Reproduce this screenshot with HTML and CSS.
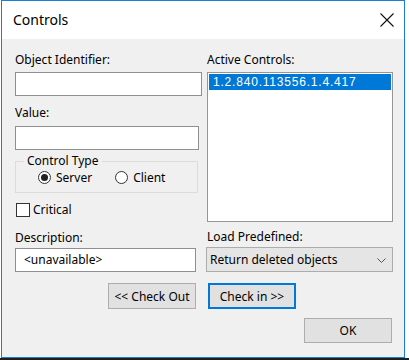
FILE: index.html
```html
<!DOCTYPE html>
<html>
<head>
<meta charset="utf-8">
<link rel="stylesheet" href="styles.css">
</head>
<body>
<div class="frame">
  <div class="window">
    <div class="titlebar">
      <span class="title">Controls</span>
      <svg class="close" width="14" height="14" viewBox="0 0 14 14"><path d="M0.5 0.5 L13.5 13.5 M13.5 0.5 L0.5 13.5" stroke="#111" stroke-width="1.1" fill="none"/></svg>
    </div>
    <div class="content">
      <div class="columns">
        <div class="col">
          <div class="lbl">Object Identifier:</div>
          <div class="edit oid"></div>
          <div class="lbl value-lbl">Value:</div>
          <div class="edit value"></div>
          <div class="group">
            <span class="legend">Control Type</span>
            <div class="radios">
              <span class="radio"><span class="circle checked"></span>Server</span>
              <span class="radio client"><span class="circle"></span>Client</span>
            </div>
          </div>
          <div class="check"><span class="box"></span>Critical</div>
          <div class="lbl desc-lbl">Description:</div>
          <div class="edit desc">&lt;unavailable&gt;</div>
        </div>
        <div class="col">
          <div class="lbl">Active Controls:</div>
          <div class="listbox"><div class="item selected">1.2.840.113556.1.4.417</div></div>
          <div class="lbl load-lbl">Load Predefined:</div>
          <div class="combo"><span>Return deleted objects</span><svg class="chev" width="9" height="5" viewBox="0 0 9 5"><path d="M0.5 0.5 L4.5 4.5 L8.5 0.5" stroke="#555" stroke-width="1" fill="none"/></svg></div>
        </div>
      </div>
      <div class="transfer">
        <button class="btn out">&lt;&lt; Check Out</button>
        <button class="btn in focused">Check in &gt;&gt;</button>
      </div>
      <div class="footer">
        <button class="btn ok">OK</button>
      </div>
    </div>
  </div>
</div>
</body>
</html>
```
FILE: styles.css
```css
html, body {
  margin: 0;
  padding: 0;
  background: #ffffff;
}
body {
  font-family: "Noto Sans", "Open Sans", sans-serif;
  font-size: 12px;
  color: #000;
}
.frame {
  width: 409px;
  height: 360px;
  box-sizing: border-box;
  border-bottom: 2px solid #1e1e1e;
}
.window {
  margin-left: 1px;
  width: 404px;
  height: 358px;
  box-sizing: border-box;
  border: 1px solid #1a7fd4;
  background: #f0f0f0;
}
.titlebar {
  height: 38px;
  background: #ffffff;
  display: flex;
  align-items: center;
  justify-content: space-between;
  padding: 0 10px 0 11px;
}
.title {
  font-size: 14px;
  line-height: 20px;
  margin-top: -1px;
}
.close {
  margin-top: -1px;
}
.content {
  padding: 13px 11px 0 13px;
}
.columns {
  display: flex;
  gap: 6px;
}
.col {
  width: 186px;
  display: flex;
  flex-direction: column;
  align-items: flex-start;
}
.lbl {
  line-height: 16px;
  height: 16px;
  white-space: nowrap;
}
.edit {
  box-sizing: border-box;
  height: 24px;
  background: #fff;
  border: 1px solid #8f8f8f;
  margin-top: 4px;
  line-height: 22px;
  padding-left: 8px;
}
.oid { width: 187px; }
.value-lbl { margin-top: 9px; }
.value { width: 184px; margin-top: 5px; }
.group {
  position: relative;
  box-sizing: border-box;
  width: 183px;
  height: 32px;
  margin-top: 11px;
  border: 1px solid #dcdcdc;
}
.legend {
  position: absolute;
  left: 8px;
  top: -9px;
  padding: 0 3px;
  background: #f0f0f0;
  line-height: 16px;
}
.radios {
  display: flex;
  align-items: center;
  height: 30px;
  padding-left: 22px;
  padding-top: 1px;
  box-sizing: border-box;
}
.radio {
  display: flex;
  align-items: center;
  gap: 5px;
}
.radio.client { margin-left: 23px; }
.circle {
  width: 13px;
  height: 13px;
  box-sizing: border-box;
  border: 1px solid #333;
  border-radius: 50%;
  background: #fff;
  display: flex;
  align-items: center;
  justify-content: center;
}
.circle.checked::after {
  content: "";
  width: 7px;
  height: 7px;
  border-radius: 50%;
  background: #222;
}
.check {
  display: flex;
  align-items: center;
  gap: 3px;
  margin-top: 9px;
  margin-left: 1px;
  height: 15px;
}
.box {
  width: 14px;
  height: 14px;
  box-sizing: border-box;
  border: 1px solid #333;
  background: #fff;
}
.desc-lbl { margin-top: 13px; }
.desc { width: 181px; margin-top: 2px; height: 24px; }
.listbox {
  box-sizing: border-box;
  width: 186px;
  height: 150px;
  margin-top: 4px;
  background: #fff;
  border: 1px solid #969696;
  padding: 1px;
}
.item {
  height: 16px;
  line-height: 16px;
  padding-left: 4px;
  font-family: "Liberation Sans", sans-serif;
  letter-spacing: 0.8px;
}
.item.selected {
  background: #0078d7;
  color: #fff;
}
.load-lbl { margin-top: 7px; }
.combo {
  box-sizing: border-box;
  width: 187px;
  height: 25px;
  margin-left: -1px;
  margin-top: 2px;
  background: #e5e5e5;
  border: 1px solid #acacac;
  display: flex;
  align-items: center;
  justify-content: space-between;
  padding: 0 6px 0 3px;
}
.chev { margin-top: 1px; }
.transfer {
  display: flex;
  margin-top: 11px;
  padding-left: 93px;
  gap: 12px;
}
.btn {
  font-family: inherit;
  font-size: 12px;
  color: #000;
  box-sizing: border-box;
  width: 88px;
  height: 26px;
  background: #e1e1e1;
  border: 1px solid #adadad;
  padding: 0;
  margin: 0;
  border-radius: 0;
}
.btn.focused {
  border: 1px solid #0078d7;
  box-shadow: inset 0 0 0 1px #0078d7;
}
.footer {
  display: flex;
  justify-content: flex-end;
  margin-top: 9px;
  padding-right: 1px;
}
.btn.ok { height: 25px; }
```
